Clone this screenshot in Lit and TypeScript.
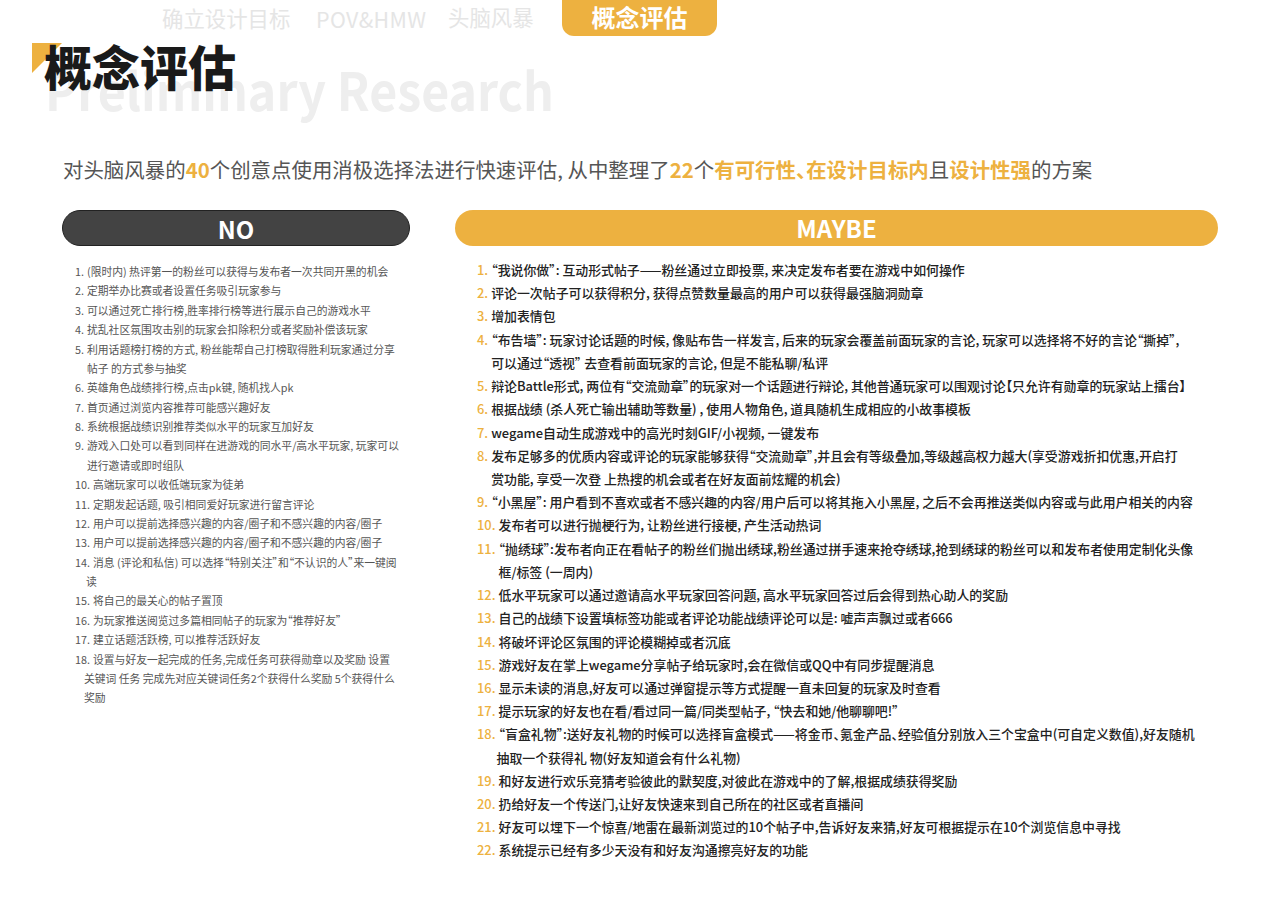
import { LitElement, html, css } from "lit";
import { customElement } from "lit/decorators.js";

type Item = { n: string; lines: string[]; hang?: number };

const NO: Item[] = [
  { n: "1.", lines: ["(限时内) 热评第一的粉丝可以获得与发布者一次共同开黑的机会"] },
  { n: "2.", lines: ["定期举办比赛或者设置任务吸引玩家参与"] },
  { n: "3.", lines: ["可以通过死亡排行榜,胜率排行榜等进行展示自己的游戏水平"] },
  { n: "4.", lines: ["扰乱社区氛围攻击别的玩家会扣除积分或者奖励补偿该玩家"] },
  { n: "5.", lines: ["利用话题榜打榜的方式, 粉丝能帮自己打榜取得胜利玩家通过分享", "帖子 的方式参与抽奖"] },
  { n: "6.", lines: ["英雄角色战绩排行榜,点击pk键, 随机找人pk"] },
  { n: "7.", lines: ["首页通过浏览内容推荐可能感兴趣好友"] },
  { n: "8.", lines: ["系统根据战绩识别推荐类似水平的玩家互加好友"] },
  { n: "9.", lines: ["游戏入口处可以看到同样在进游戏的同水平/高水平玩家, 玩家可以", "进行邀请或即时组队"] },
  { n: "10.", lines: ["高端玩家可以收低端玩家为徒弟"] },
  { n: "11.", lines: ["定期发起话题, 吸引相同爱好玩家进行留言评论"] },
  { n: "12.", lines: ["用户可以提前选择感兴趣的内容/圈子和不感兴趣的内容/圈子"] },
  { n: "13.", lines: ["用户可以提前选择感兴趣的内容/圈子和不感兴趣的内容/圈子"] },
  { n: "14.", lines: ["消息 (评论和私信) 可以选择“特别关注”和“不认识的人”来一键阅", "读"], hang: 7 },
  { n: "15.", lines: ["将自己的最关心的帖子置顶"] },
  { n: "16.", lines: ["为玩家推送阅览过多篇相同帖子的玩家为“推荐好友”"] },
  { n: "17.", lines: ["建立话题活跃榜, 可以推荐活跃好友"] },
  { n: "18.", lines: ["设置与好友一起完成的任务,完成任务可获得勋章以及奖励 设置", "关键词 任务 完成先对应关键词任务2个获得什么奖励 5个获得什么", "奖励"], hang: 9 },
];

const MAYBE: Item[] = [
  { n: "1.", lines: ["“我说你做”: 互动形式帖子——粉丝通过立即投票, 来决定发布者要在游戏中如何操作"] },
  { n: "2.", lines: ["评论一次帖子可以获得积分, 获得点赞数量最高的用户可以获得最强脑洞勋章"] },
  { n: "3.", lines: ["增加表情包"] },
  { n: "4.", lines: ["“布告墙”: 玩家讨论话题的时候, 像贴布告一样发言, 后来的玩家会覆盖前面玩家的言论, 玩家可以选择将不好的言论“撕掉”,", "可以通过“透视” 去查看前面玩家的言论, 但是不能私聊/私评"] },
  { n: "5.", lines: ["辩论Battle形式, 两位有“交流勋章”的玩家对一个话题进行辩论, 其他普通玩家可以围观讨论【只允许有勋章的玩家站上擂台】"] },
  { n: "6.", lines: ["根据战绩 (杀人死亡输出辅助等数量) , 使用人物角色, 道具随机生成相应的小故事模板"] },
  { n: "7.", lines: ["wegame自动生成游戏中的高光时刻GIF/小视频, 一键发布"] },
  { n: "8.", lines: ["发布足够多的优质内容或评论的玩家能够获得“交流勋章”,并且会有等级叠加,等级越高权力越大(享受游戏折扣优惠,开启打", "赏功能, 享受一次登 上热搜的机会或者在好友面前炫耀的机会)"] },
  { n: "9.", lines: ["“小黑屋”: 用户看到不喜欢或者不感兴趣的内容/用户后可以将其拖入小黑屋, 之后不会再推送类似内容或与此用户相关的内容"] },
  { n: "10.", lines: ["发布者可以进行抛梗行为, 让粉丝进行接梗, 产生活动热词"] },
  { n: "11.", lines: ["“抛绣球”:发布者向正在看帖子的粉丝们抛出绣球,粉丝通过拼手速来抢夺绣球,抢到绣球的粉丝可以和发布者使用定制化头像", "框/标签 (一周内)"] },
  { n: "12.", lines: ["低水平玩家可以通过邀请高水平玩家回答问题, 高水平玩家回答过后会得到热心助人的奖励"] },
  { n: "13.", lines: ["自己的战绩下设置填标签功能或者评论功能战绩评论可以是: 嘘声声飘过或者666"] },
  { n: "14.", lines: ["将破坏评论区氛围的评论模糊掉或者沉底"] },
  { n: "15.", lines: ["游戏好友在掌上wegame分享帖子给玩家时,会在微信或QQ中有同步提醒消息"] },
  { n: "16.", lines: ["显示未读的消息,好友可以通过弹窗提示等方式提醒一直未回复的玩家及时查看"] },
  { n: "17.", lines: ["提示玩家的好友也在看/看过同一篇/同类型帖子, “快去和她/他聊聊吧!”"] },
  { n: "18.", lines: ["“盲盒礼物”:送好友礼物的时候可以选择盲盒模式——将金币、氪金产品、经验值分别放入三个宝盒中(可自定义数值),好友随机", "抽取一个获得礼 物(好友知道会有什么礼物)"], hang: 2 },
  { n: "19.", lines: ["和好友进行欢乐竞猜考验彼此的默契度,对彼此在游戏中的了解,根据成绩获得奖励"] },
  { n: "20.", lines: ["扔给好友一个传送门,让好友快速来到自己所在的社区或者直播间"] },
  { n: "21.", lines: ["好友可以埋下一个惊喜/地雷在最新浏览过的10个帖子中,告诉好友来猜,好友可根据提示在10个浏览信息中寻找"] },
  { n: "22.", lines: ["系统提示已经有多少天没有和好友沟通擦亮好友的功能"] },
];

@customElement("app-root")
export class AppRoot extends LitElement {
  static styles = css`
    :host {
      display: block;
      width: 1280px;
      height: 905px;
      overflow: hidden;
      background: #fff;
      font-family: "Noto Sans CJK SC", "Noto Sans", sans-serif;
      font-feature-settings: "palt";
    }
    .nav {
      display: flex;
      align-items: flex-start;
      height: 36px;
      padding-left: 162px;
      color: #e5e5e5;
      font-size: 21.4px;
      line-height: 36px;
    }
    .nav span { white-space: nowrap; }
    .nav .n1 { width: 154px; }
    .nav .n2 { width: 132px; margin-top: 1px; letter-spacing: 0.4px; }
    .nav .n3 { width: 114px; margin-top: -1px; }
    .nav .tab {
      width: 155px;
      height: 36px;
      border-radius: 0 0 12px 12px;
      background: #edb140;
      color: #fff;
      font-size: 24px;
      font-weight: 700;
      line-height: 34px;
      text-align: center;
    }
    .head {
      position: relative;
      height: 113px;
      padding-left: 44px;
    }
    .tri {
      position: absolute;
      left: 32px;
      top: 7px;
      width: 30px;
      height: 30px;
      background: #edb140;
      clip-path: polygon(0 0, 100% 0, 0 100%);
    }
    .ghost {
      position: absolute;
      left: 45px;
      top: 19px;
      color: #eeeeee;
      font-size: 52.5px;
      font-weight: 700;
      line-height: 66px;
      white-space: nowrap;
      transform: scaleX(0.92);
      transform-origin: left center;
    }
    .title {
      position: relative;
      top: -4px;
      color: #1a1a1a;
      font-size: 48px;
      font-weight: 900;
      line-height: 66px;
    }
    .sub {
      height: 61px;
      padding-left: 63px;
      color: #555;
      font-size: 20.45px;
      line-height: 40px;
      white-space: nowrap;
    }
    .sub b { color: #edb140; font-weight: 700; }
    .cols {
      display: flex;
      padding-left: 62px;
      gap: 45px;
    }
    .pill {
      height: 36px;
      border-radius: 18px;
      color: #fff;
      font-size: 24px;
      font-weight: 700;
      line-height: 36px;
      text-align: center;
    }
    .left { width: 348px; }
    .right { width: 763px; }
    .left .pill { background: #434343; box-sizing: border-box; border: 1px solid #222; line-height: 35px; }
    .right .pill { background: #edb140; }
    .list-l { padding: 16px 0 0 13px; color: #555; font-size: 10.8px; line-height: 19.37px; }
    .list-r { padding: 12px 0 0 22px; color: #222; font-size: 12.9px; font-weight: 500; line-height: 23.22px; }
    .row { display: flex; white-space: nowrap; }
    .num { flex: none; margin-right: 3px; }
    .list-r .num { color: #edb140; }
    .line { display: block; }
  `;

  private item(it: Item) {
    return html`<div class="row">
      <span class="num">${it.n}</span>
      <div>
        ${it.lines.map(
          (l, i) =>
            html`<span
              class="line"
              style=${i > 0 && it.hang !== undefined ? `margin-left:${-it.hang}px` : ""}
              >${l}</span
            >`
        )}
      </div>
    </div>`;
  }

  render() {
    return html`
      <div class="nav">
        <span class="n1">确立设计目标</span>
        <span class="n2">POV&amp;HMW</span>
        <span class="n3">头脑风暴</span>
        <span class="tab">概念评估</span>
      </div>
      <div class="head">
        <div class="tri"></div>
        <div class="ghost">Preliminary Research</div>
        <div class="title">概念评估</div>
      </div>
      <div class="sub">对头脑风暴的<b>40</b>个创意点使用消极选择法进行快速评估, 从中整理了<b>22</b>个<b>有可行性、在设计目标内</b>且<b>设计性强</b>的方案</div>
      <div class="cols">
        <div class="left">
          <div class="pill">NO</div>
          <div class="list-l">${NO.map((i) => this.item(i))}</div>
        </div>
        <div class="right">
          <div class="pill">MAYBE</div>
          <div class="list-r">${MAYBE.map((i) => this.item(i))}</div>
        </div>
      </div>
    `;
  }
}
